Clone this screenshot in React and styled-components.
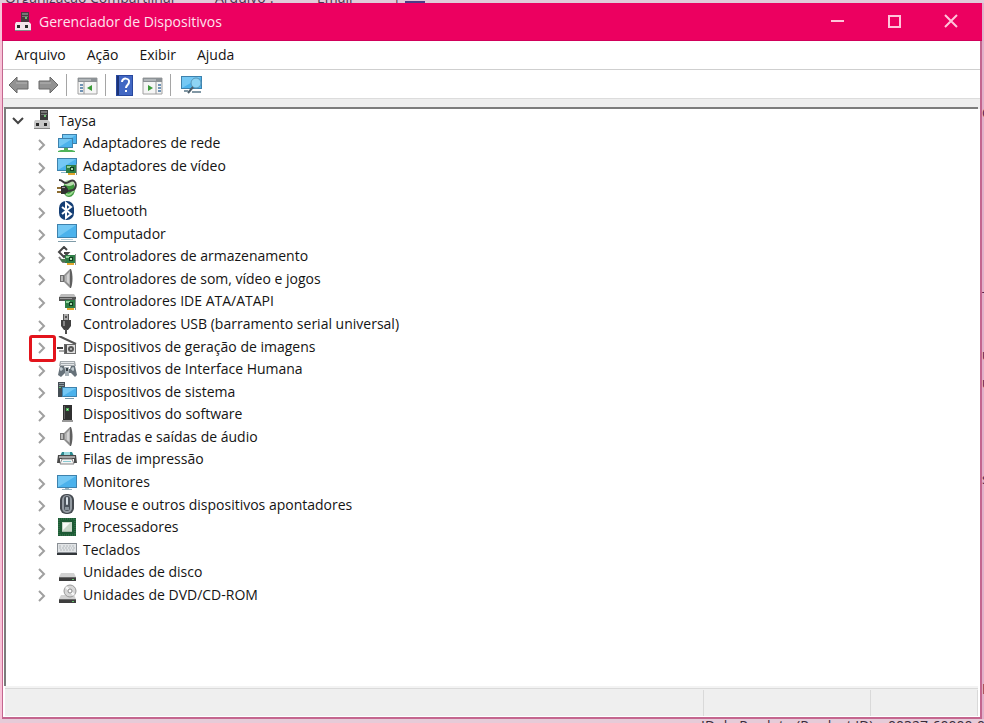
import React, { useState } from "react";
import styled, { createGlobalStyle } from "styled-components";

const GlobalStyle = createGlobalStyle`
  * {
    box-sizing: border-box;
  }
  body {
    margin: 0;
    background: #e6cbd8;
    color: #141414;
    font-family: "Open Sans", "Noto Sans", sans-serif;
    font-size: 14px;
  }
  button {
    padding: 0;
    border: 0;
    background: none;
    color: inherit;
    font: inherit;
  }
  svg {
    display: block;
  }
`;

const Desktop = styled.div`
  display: flex;
  flex-direction: column;
  height: 100vh;
  min-height: 640px;
  overflow: hidden;
`;
const TopStrip = styled.div`
  display: flex;
  align-items: flex-end;
  height: 3px;
  padding-left: 5px;
  overflow: hidden;
  background: #e0cbd9;
  color: #4a3450;
  line-height: 10px;
  white-space: nowrap;
`;
const TopText = styled.span`
  flex: none;
  width: ${(props) => props.$width}px;
`;
const Dash = styled.span`
  width: 20px;
  height: 2px;
  background: #4b3d86;
`;
const Middle = styled.div`
  display: flex;
  flex: 1;
  min-height: 0;
`;
const LeftStrip = styled.div`
  width: 2px;
  background: #f8c3d8;
`;
const RightStrip = styled.div`
  display: flex;
  flex-direction: column;
  width: 2px;
  overflow: hidden;
  background: #e2b0c9;
  color: #4a2350;
  line-height: 16px;
`;
const RightText = styled.span`
  margin-top: ${(props) => props.$gap}px;
`;
const BottomStrip = styled.div`
  display: flex;
  justify-content: flex-end;
  height: 4px;
  overflow: hidden;
  color: #3b2a38;
  line-height: 14px;
  white-space: nowrap;
`;
const BottomText = styled.span`
  flex: none;
  width: ${(props) => props.$width}px;
`;

const Window = styled.main`
  display: flex;
  flex: 1;
  flex-direction: column;
  min-width: 0;
  border: solid #c4668f;
  border-width: 0 2px 2px 1px;
  background: #fff;
`;
const TitleBar = styled.header`
  display: flex;
  align-items: center;
  height: 38px;
  margin: 0 -2px 0 -1px;
  padding: 0 23px 0 12px;
  background: #ec0060;
  border-bottom: 1px solid #d1005a;
  color: #ffe3ee;
`;
const Title = styled.h1`
  flex: 1;
  margin: 0 0 0 7px;
  font-size: 14px;
  font-weight: 400;
`;
const WindowButtons = styled.div`
  display: flex;
  gap: 42px;
`;
const MenuBar = styled.nav`
  display: flex;
  gap: 21px;
  height: 29px;
  padding: 0 12px 2px;
  border-bottom: 1px solid #cfcfcf;
`;
const ToolBar = styled.div`
  display: flex;
  align-items: center;
  height: 28px;
  padding: 2px 5px 0;
`;
const ToolGroup = styled.div`
  display: flex;
  align-items: center;
  gap: 9px;
  height: 22px;
  padding: 0 7px 0 ${(props) => (props.$first ? 0 : 10)}px;
  & + & {
    border-left: 1px solid #a5a5a5;
  }
`;
const Content = styled.section`
  flex: 1;
  min-height: 0;
  padding: 8px 2px 0 1px;
  background: linear-gradient(#eeeeee 10px, #fff 10px);
  border-top: 1px solid #dcdcdc;
`;
const TreePane = styled.div`
  height: 100%;
  border: solid #7c7c7c;
  border-width: 2px 0 0 2px;
  background: #fff;
`;
const Tree = styled.ul`
  display: grid;
  grid-auto-rows: 22px 23px 23px 22px 23px 22px 23px;
  margin: 0;
  padding: 0;
  list-style: none;
`;
const Row = styled.li`
  display: flex;
  align-items: center;
  padding-left: ${(props) => (props.$root ? 4 : 27)}px;
  white-space: nowrap;
`;
const Caret = styled.button`
  position: relative;
  width: 16px;
  height: 16px;
  margin-right: ${(props) => (props.$root ? 7 : 8)}px;
`;
const Marker = styled.span`
  position: absolute;
  inset: -3px -7px -8px -4px;
  border: 3px solid #e3141c;
  border-radius: 3px;
`;
const Label = styled.span`
  margin-left: ${(props) => (props.$root ? 8 : 6)}px;
`;
const StatusBar = styled.footer`
  display: flex;
  flex: none;
  height: 30px;
  margin: 0 2px 1px;
  border-top: 2px solid #f3f3f3;
  background: #efefef;
  box-shadow: inset 0 1px #dadada;
`;
const StatusCell = styled.div`
  flex: ${(props) => (props.$width ? "none" : 1)};
  width: ${(props) => props.$width}px;
  margin-top: 2px;
  border-right: 1px solid #d9d9d9;
`;

const Svg = ({ children, w = 20, h = 20 }) => (
  <svg width={w} height={h} viewBox={`0 0 ${w} ${h}`} aria-hidden="true">
    {children}
  </svg>
);

const Screen = ({ x, y, w, h }) => (
  <>
    <rect x={x} y={y} width={w} height={h} fill="#3e82ad" />
    <rect x={x + 1} y={y + 1} width={w - 2} height={h - 2} fill="#4bb2ec" />
    <path d={`M${x + 1} ${y + 1}h${w - 2}L${x + 1} ${y + h - 1}z`} fill="#74c8f4" />
  </>
);

const Chip = ({ x, y }) => (
  <>
    <path d={`M${x} ${y}h11v8h-11z`} fill="#2d7d45" />
    <path d={`M${x + 1} ${y + 1}h4v2h-4z`} fill="#8fcf9a" />
    <rect x={x + 4} y={y + 2} width="4" height="4" fill="#123d20" />
    <path d={`M${x + 5} ${y + 3}h2v2h-2z`} fill="#a4d9ab" />
    <path d={`M${x + 2} ${y + 8}h7v2h-7z`} fill="#e3a72d" />
    <path d={`M${x + 10} ${y - 1}h1v11h-1z`} fill="#8b9490" />
  </>
);

const ComputerIcon = ({ light }) => (
  <Svg w={18}>
    <rect x="7" y="0" width="8" height="11" fill={light ? "#4c3940" : "#3c3c3c"} />
    <path d="M8 1h6v2H8zM8 4h6v1H8z" fill="#777" />
    <rect x="11" y="5" width="2" height="2" fill="#6fbf74" />
    <path d="M2 10h13l2 2v7H1v-7z" fill={light ? "#f4e5ea" : "#c9c9c9"} />
    <path d="M1 18h16v1H1z" fill="#858585" />
    <path d="M3 13h3v3H3zM11 13h3v3h-3z" fill="#292929" />
  </Svg>
);

const SpeakerIcon = () => (
  <Svg>
    <path d="M3 7h4v7H3z" fill="#6f6f6f" />
    <path d="M4 8h2v5H4z" fill="#b9b9b9" />
    <path d="M7 7l6-6h1v19h-1l-6-6z" fill="#8d8d8d" />
    <path d="M8 8l5-5v14l-5-4z" fill="#b4b4b4" />
    <path d="M13 1h1c2 5 2 14 0 19h-1z" fill="#5f5f5f" />
    <path d="M10 7l2-2v11l-2-2z" fill="#d2d2d2" />
  </Svg>
);

const DriveBody = () => (
  <>
    <path d="M4 11h13l2 4H2z" fill="#d2d2d2" />
    <path d="M2 15h17v4H2z" fill="#3e3e3e" />
    <path d="M2 15h17v1H2z" fill="#696969" />
    <path d="M15 17h2v1h-2z" fill="#63c06a" />
  </>
);

const icons = {
  network: (
    <Svg>
      <Screen x={5} y={1} w={15} h={10} />
      <Screen x={1} y={5} w={15} h={10} />
      <path d="M7 15h4v2H7z" fill="#58ad62" />
      <path d="M1 18l3-1h11l3 1v1H1z" fill="#4fb35a" />
    </Svg>
  ),
  video: (
    <Svg>
      <Screen x={0} y={2} w={20} h={13} />
      <path d="M4 16h6v1H4z" fill="#8eb6cc" />
      <Chip x={9} y={9} />
    </Svg>
  ),
  battery: (
    <Svg>
      <ellipse cx="12" cy="11" rx="6" ry="8" fill="#3c963c" />
      <ellipse cx="12" cy="5" rx="5" ry="3" fill="#b9dcad" />
      <path d="M9 16c4 2 6-1 8-4" stroke="#9bd990" strokeWidth="2" fill="none" />
      <path d="M2 2c4 0 4 3 7 3s5-4 8-2 2 8-1 9-5 1-7 1" fill="none" stroke="#3a3a3a" strokeWidth="2" />
      <path d="M4 8h5l2 3v3l-3 2H4z" fill="#303030" />
      <path d="M0 10h4M0 14h4" stroke="#8d6d32" strokeWidth="2" />
      <path d="M5 9h3v1H5z" fill="#a0a0a0" />
    </Svg>
  ),
  bluetooth: (
    <Svg>
      <rect x="2" y="0" width="15" height="19" rx="7" fill="#153f75" />
      <path d="M5 6l9 7-5 4V2l5 4-9 7" fill="none" stroke="#fff" strokeWidth="2" />
    </Svg>
  ),
  desktop: (
    <Svg>
      <Screen x={0} y={1} w={20} h={14} />
      <path d="M4 16h12v1H4z" fill="#b8d1dc" />
      <path d="M1 18h18v1H1z" fill="#7f9ba8" />
    </Svg>
  ),
  storage: (
    <Svg>
      <path d="M10 4L7 1 2 6l5 5 4-4H7" fill="none" stroke="#454545" strokeWidth="2" />
      <path d="M2 11l4 5h3" fill="none" stroke="#777" strokeWidth="2" />
      <Chip x={8} y={9} />
      <path d="M3 13h6v3H5z" fill="#47774f" />
    </Svg>
  ),
  sound: <SpeakerIcon />,
  ide: (
    <Svg>
      <path d="M4 3h13l2 3H2z" fill="#bdbdbd" />
      <path d="M2 6h17v4H2z" fill="#555" />
      <path d="M3 7h12v1H3z" fill="#999" />
      <Chip x={8} y={9} />
    </Svg>
  ),
  usb: (
    <Svg>
      <path d="M6 0h6v6H6z" fill="#aaa" />
      <path d="M6 0h1v6H6zM11 0h1v6h-1zM8 2h2v2H8z" fill="#555" />
      <path d="M4 6h10v6l-3 4H7l-3-4z" fill="#414141" />
      <path d="M6 7h2v5H6z" fill="#858585" />
      <path d="M8 15h2v5H8z" fill="#4e4e4e" />
    </Svg>
  ),
  imaging: (
    <Svg>
      <path d="M2 0l17 8" stroke="#555" strokeWidth="2" />
      <path d="M0 11h6v2H0z" fill="#3f3f3f" />
      <path d="M2 14h5v2H2z" fill="#aaa" />
      <path d="M7 8h12v10H7z" fill="#6a6a6a" />
      <path d="M8 9h10v8H8z" fill="#dedede" />
      <circle cx="14" cy="13" r="3" fill="#555" />
      <circle cx="14" cy="13" r="1" fill="#ccc" />
      <path d="M8 9h2v8H8z" fill="#555" />
    </Svg>
  ),
  hid: (
    <Svg>
      <path d="M3 2h15l1 5H2z" fill="#a4aaae" />
      <path d="M4 3h13v1H4zM4 5h13v1H4z" fill="#e3e6e8" />
      <path d="M3 7h4l1 3h5l1-3h4l2 9-2 2-4-4H8l-4 4-3-2z" fill="#67727a" />
      <path d="M3 10h3M14 10h3M4 8v4M16 8v4" stroke="#dce5ea" />
      <path d="M8 8h4v9H8z" fill="#a8b2b8" />
      <path d="M9 9h2v3H9z" fill="#384046" />
    </Svg>
  ),
  system: (
    <Svg>
      <path d="M1 1h7v15H1z" fill="#454e55" />
      <path d="M2 2h5v1H2zM2 4h5v1H2z" fill="#8b979e" />
      <path d="M2 6h2v1H2z" fill="#65c46f" />
      <Screen x={5} y={6} w={15} h={10} />
      <path d="M8 17h9v1H8z" fill="#7898aa" />
    </Svg>
  ),
  software: (
    <Svg>
      <path d="M6 1h9v15H6z" fill="#303030" />
      <path d="M7 2h1v13H7z" fill="#666" />
      <path d="M9 4h3v3H9z" fill="#4fae5b" />
      <path d="M10 5h1v1h-1z" fill="#b8ffc0" />
      <path d="M5 16h11v2H5z" fill="#999" />
    </Svg>
  ),
  printer: (
    <Svg>
      <path d="M5 3h10l2 4H3z" fill="#2c898f" />
      <path d="M7 3h6v3H7z" fill="#9adade" />
      <path d="M1 6h18l1 8h-3v-4H3v4H0z" fill="#4a4a4a" />
      <path d="M2 7h16v2H2z" fill="#a6a6a6" />
      <path d="M5 10h10l2 5H3z" fill="#f5f5f5" stroke="#858585" />
      <path d="M6 12h8v1H6z" fill="#8ccbd3" />
    </Svg>
  ),
  monitor: (
    <Svg>
      <Screen x={0} y={3} w={20} h={13} />
      <path d="M8 16h4v1H8zM5 17h10v1H5z" fill="#97b1bd" />
    </Svg>
  ),
  mouse: (
    <Svg>
      <rect x="3" y="0" width="14" height="20" rx="6" fill="#454a50" />
      <rect x="5" y="1" width="10" height="18" rx="5" fill="#949ba2" />
      <rect x="7" y="2" width="6" height="15" rx="3" fill="#4b535b" />
      <rect x="9" y="3" width="2" height="8" rx="1" fill="#d8e1e7" />
      <path d="M8 13h4v3H8z" fill="#89939b" />
    </Svg>
  ),
  cpu: (
    <Svg>
      <rect x="1" y="1" width="18" height="18" fill="#1d5a35" />
      <rect x="2" y="2" width="16" height="16" fill="none" stroke="#3e8055" strokeDasharray="1 1" />
      <rect x="5" y="5" width="10" height="10" fill="#c9d8ca" />
      <path d="M6 6h7l-7 7z" fill="#f7faf7" />
      <path d="M5 14h10v1H5z" fill="#a9baac" />
    </Svg>
  ),
  keyboard: (
    <Svg>
      <path d="M0 4h20v12H0z" fill="#8a8f95" />
      <path d="M1 5h18v8H1z" fill="#e1e4e6" />
      <path d="M2 7h3M6 7h12M2 9h13M16 9h2M3 11h14" stroke="#b4b9bd" strokeDasharray="2 1" />
      <path d="M0 14h20v2H0z" fill="#32363a" />
    </Svg>
  ),
  disk: (
    <Svg>
      <DriveBody />
    </Svg>
  ),
  dvd: (
    <Svg>
      <DriveBody />
      <circle cx="13" cy="7" r="6" fill="#d7d7d7" stroke="#999" />
      <path d="M13 7l-4-4M13 7l4 4" stroke="#f8f8f8" strokeWidth="2" />
      <circle cx="13" cy="7" r="2" fill="#fff" stroke="#8a8a8a" />
    </Svg>
  ),
};

const devices = [
  ["network", "Adaptadores de rede"],
  ["video", "Adaptadores de vídeo"],
  ["battery", "Baterias"],
  ["bluetooth", "Bluetooth"],
  ["desktop", "Computador"],
  ["storage", "Controladores de armazenamento"],
  ["sound", "Controladores de som, vídeo e jogos"],
  ["ide", "Controladores IDE ATA/ATAPI"],
  ["usb", "Controladores USB (barramento serial universal)"],
  ["imaging", "Dispositivos de geração de imagens"],
  ["hid", "Dispositivos de Interface Humana"],
  ["system", "Dispositivos de sistema"],
  ["software", "Dispositivos do software"],
  ["sound", "Entradas e saídas de áudio"],
  ["printer", "Filas de impressão"],
  ["monitor", "Monitores"],
  ["mouse", "Mouse e outros dispositivos apontadores"],
  ["cpu", "Processadores"],
  ["keyboard", "Teclados"],
  ["disk", "Unidades de disco"],
  ["dvd", "Unidades de DVD/CD-ROM"],
];

const Arrow = ({ forward }) => (
  <Svg w={21}>
    <path
      d={forward ? "M20 10l-8-8v4H1v8h11v4z" : "M1 10l8-8v4h11v8H9v4z"}
      fill="#929292"
      stroke="#686868"
    />
    <path d={forward ? "M2 8h11" : "M8 8h11"} stroke="#b5b5b5" />
  </Svg>
);

const PanelIcon = ({ right }) => (
  <Svg w={21}>
    <path d="M1 3h19v16H1z" fill="#f5f5f5" stroke="#a0a0a0" />
    <path d="M1 3h19v4H1z" fill="#8c9296" />
    <path d="M2 5h12" stroke="#d5d8da" />
    <path d={right ? "M14 7v12" : "M7 7v12"} stroke="#999" />
    <path
      d={right ? "M16 10h3M16 13h3M16 16h3" : "M3 10h3M3 13h3M3 16h3"}
      stroke="#6f93b5"
      strokeWidth="2"
    />
    <path d={right ? "M6 10l5 3-5 3z" : "M15 10l-5 3 5 3z"} fill="#3b9b38" />
  </Svg>
);

const HelpIcon = () => (
  <Svg w={17} h={21}>
    <path d="M0 0h17v21H0z" fill="#28489e" />
    <path d="M3 1h13v19H3z" fill="#4167c3" />
    <path d="M1 1h2v19H1z" fill="#1c3376" />
    <path d="M6 7c0-5 8-4 7 0 0 3-3 3-3 6" fill="none" stroke="#fff" strokeWidth="2" />
    <path d="M9 15h2v2H9z" fill="#fff" />
  </Svg>
);

const ScanIcon = () => (
  <Svg w={22}>
    <Screen x={0} y={1} w={21} h={13} />
    <circle cx="15" cy="8" r="5" fill="#8ed4f4" stroke="#5997b9" />
    <path d="M12 12l-5 6" stroke="#4d5f6b" strokeWidth="2" />
    <path d="M3 16h4M11 17h9" stroke="#8298a5" strokeWidth="2" />
  </Svg>
);

export default function App() {
  const [open, setOpen] = useState(true);

  return (
    <Desktop>
      <GlobalStyle />
      <TopStrip>
        <TopText $width={210}>Organização Compartilhar</TopText>
        <TopText $width={102}>Arquivo ?</TopText>
        <TopText $width={76}>Email</TopText>
        <TopText $width={12}>|</TopText>
        <Dash />
      </TopStrip>
      <Middle>
        <LeftStrip />
        <Window>
          <TitleBar>
            <ComputerIcon light />
            <Title>Gerenciador de Dispositivos</Title>
            <WindowButtons>
              <button aria-label="Minimizar">
                <Svg w={15} h={15}>
                  <path d="M1 7h13" stroke="#ffc4da" strokeWidth="2" />
                </Svg>
              </button>
              <button aria-label="Maximizar">
                <Svg w={15} h={15}>
                  <path d="M2 2h11v11H2z" fill="none" stroke="#ffc4da" strokeWidth="2" />
                </Svg>
              </button>
              <button aria-label="Fechar">
                <Svg w={15} h={15}>
                  <path d="M1 1l12 12M13 1L1 13" stroke="#ffc4da" strokeWidth="2" />
                </Svg>
              </button>
            </WindowButtons>
          </TitleBar>
          <MenuBar>
            {["Arquivo", "Ação", "Exibir", "Ajuda"].map((item) => (
              <button key={item}>{item}</button>
            ))}
          </MenuBar>
          <ToolBar>
            <ToolGroup $first>
              <button aria-label="Voltar">
                <Arrow />
              </button>
              <button aria-label="Avançar">
                <Arrow forward />
              </button>
            </ToolGroup>
            <ToolGroup>
              <button aria-label="Mostrar árvore">
                <PanelIcon />
              </button>
            </ToolGroup>
            <ToolGroup>
              <button aria-label="Ajuda">
                <HelpIcon />
              </button>
              <button aria-label="Mostrar ações">
                <PanelIcon right />
              </button>
            </ToolGroup>
            <ToolGroup>
              <button aria-label="Verificar hardware">
                <ScanIcon />
              </button>
            </ToolGroup>
          </ToolBar>
          <Content>
            <TreePane>
              <Tree>
                <Row $root>
                  <Caret $root aria-label="Taysa" aria-expanded={open} onClick={() => setOpen(!open)}>
                    <Svg w={16} h={16}>
                      <path d="M3 6l5 5 5-5" fill="none" stroke="#444" strokeWidth="2" />
                    </Svg>
                  </Caret>
                  <ComputerIcon />
                  <Label $root>Taysa</Label>
                </Row>
                {open &&
                  devices.map(([icon, label]) => (
                    <Row key={label}>
                      <Caret aria-label={label} aria-expanded={false}>
                        <Svg w={16} h={16}>
                          <path d="M6 5l5 5-5 5" fill="none" stroke="#a0a0a0" strokeWidth="2" />
                        </Svg>
                        {icon === "imaging" && <Marker />}
                      </Caret>
                      {icons[icon]}
                      <Label>{label}</Label>
                    </Row>
                  ))}
              </Tree>
            </TreePane>
          </Content>
          <StatusBar>
            <StatusCell />
            <StatusCell $width={167} />
            <StatusCell $width={107} />
          </StatusBar>
        </Window>
        <RightStrip>
          <RightText $gap={102}>C</RightText>
          <RightText $gap={168}>T</RightText>
          <RightText $gap={42}>u</RightText>
          <RightText $gap={12}>u</RightText>
          <RightText $gap={80}>s</RightText>
          <RightText $gap={194}>E</RightText>
        </RightStrip>
      </Middle>
      <BottomStrip>
        <BottomText $width={187}>ID do Produto (Product ID):</BottomText>
        <BottomText $width={96}>00327-60000-0</BottomText>
      </BottomStrip>
    </Desktop>
  );
}
